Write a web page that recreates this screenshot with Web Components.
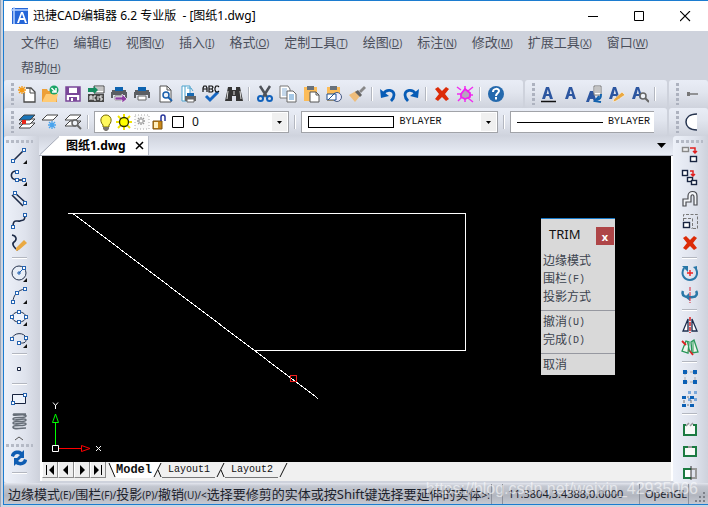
<!DOCTYPE html>
<html lang="zh-CN">
<head>
<meta charset="utf-8">
<title>迅捷CAD编辑器</title>
<style>
html,body{margin:0;height:100%}
body{font-family:"Noto Sans","Noto Sans CJK SC",sans-serif;font-size:12px;background:#cfd5e0;overflow:hidden}
</style>
</head>
<body>
<cad-app></cad-app>
<script>
const mono='"Liberation Mono","Noto Sans CJK SC",monospace';
const S='fill="none" stroke="#1f2c48" stroke-width="1.6"';
const T='fill="none" stroke="#26344f" stroke-width="1"';
const node=(x,y)=>`<rect x="${x-1.5}" y="${y-1.5}" width="3" height="3" fill="#fff" stroke="#2563b0"/>`;
const more='<path d="M17 14v4h-4z" fill="#111"/>';
const A=(x=0)=>`<path d="M${3+x} 14L${7+x} 2h3l4 12h-3l-1-3H${7+x}l-1 3zM${7.6+x} 9h2.400l-1.200-4.500z" fill="#2c56a0" fill-rule="evenodd"/>`;
const printer=(y)=>`<path d="M2 ${y+3}h14v2h1v6h-2v-3H3v3H1v-6h1z" fill="#5b5e63"/><path d="M5 ${y}h8v4h-8z" fill="#0d63b0"/><path d="M5 ${y+9}h8v4h-8z" fill="#fff" stroke="#666"/>`;
const layer=(y,f='#fff')=>`<path d="M6 ${y}h11l-5 5H1z" fill="${f}" stroke="#444" stroke-width="1"/>`;
const mag=(x,y,c='#666')=>`<circle cx="${x}" cy="${y}" r="3" fill="#eef2f8" stroke="${c}" stroke-width="1.500"/><path d="M${x+2} ${y+2}l4 4" stroke="${c}" stroke-width="2"/>`;
const star=(x,y,c)=>`<path d="M${x-4} ${y}h8M${x} ${y-4}v8M${x-3} ${y-3}l6 6M${x+3} ${y-3}l-6 6" stroke="${c}" stroke-width="1.300"/>`;
const box=(x,y,w,h,c='#17233f',f='#fff')=>`<rect x="${x+.5}" y="${y+.5}" width="${w}" height="${h}" fill="${f}" stroke="${c}" stroke-width="1.400"/>`;
const redArrow='<path d="M9 3h3v5M10 6l2 2 2-2" fill="none" stroke="#e02020" stroke-width="1.500"/>';
const cross='<path d="M2 4l3-2 4 4 4-4 3 2-4 5 4 5-3 2-4-4-4 4-3-2 4-5z" fill="#dc2b07"/>';
const page='<path d="M4 1h7l4 4v12H4z" fill="#fff" stroke="#555"/><path d="M11 1v4h4" fill="none" stroke="#555"/>';
const ICONS={
 logo:'<path d="M1 1h16v16H1z" fill="#2566d8"/><path d="M0 3h6M3 0v17M3 3h14" stroke="#b9d5ff" stroke-width="1.500"/><path d="M6 16L10 5h2l4 11h-2l-1-3H9l-1 3zM9.500 11h3L11 7z" fill="#fff" fill-rule="evenodd"/>',
 newfile:'<path d="M8 3h5l4 4v10H6V8" fill="#fff" stroke="#4a4a4a" stroke-width="1.300"/><path d="M12 3v5h5" fill="none" stroke="#4a4a4a"/>'+star(4,5,'#f59a16'),
 open:'<path d="M1 4h5l1 2h9v11H1z" fill="#ed9f37"/><path d="M5 9h12l-2 8H1z" fill="#ffcb75"/><circle cx="13" cy="5" r="4.500" fill="#1ba567"/><path d="M10.500 3l4 4M15 3v4h-4" fill="none" stroke="#fff" stroke-width="1.500"/>',
 save:'<path d="M2 2h14v14H2z" fill="#fff" stroke="#7a4799" stroke-width="1.500"/><path d="M2 2h3v6h8V2h3v8H2zM5 12h8v4H5z" fill="#7a4799"/><path d="M7 13h2v3H7z" fill="#fff"/>',
 acis:'<path d="M7 1h10v7H7z" fill="#fff" stroke="#444"/><path d="M9 3h7M9 5h7" stroke="#888"/><path d="M1 3h6v-2l4 4-4 4V7H1z" fill="#168c60"/><path d="M1 9h16v8H1z" fill="#474747"/><path d="M3 15v-4h2v4M3 13h2M9 11H7v4h2M11 11v4M15.500 11H13v2h2v2h-2" stroke="#fff" fill="none"/>',
 publish:printer(2)+'<path d="M5 12h7V9l5 5-5 4v-3H5z" fill="#8c3fa3" stroke="#fff" stroke-width=".6"/>',
 print:printer(2),
 preview:page+mag(10,10,'#1960ad'),
 plotset:'<path d="M3 1h8v15H3z" fill="#fff" stroke="#4ba2cd"/><path d="M6 1v15M8 3h4l2 3" stroke="#4ba2cd" fill="none"/><path d="M8 8h7v3h2v5H6v-5h2z" fill="#666"/><path d="M8 8h7v3H8z" fill="#1769b2"/><path d="M8 14h7v3H8z" fill="#fff" stroke="#666"/>',
 check:'<path d="M4 11l4 4 8-8" fill="none" stroke="#1767c2" stroke-width="3"/><path d="M1 7V3l1-2h2l1 2v4M1 4h4M7 1v6h3l1-1-1-2H7h3l1-2-1-1zM17 2l-1-1h-2l-1 2v2l1 2h2l1-1" fill="none" stroke="#111" stroke-width="1.200"/>',
 find:'<path d="M3 2h4v3h4V2h4l3 14h-7v-5H7v5H0z" fill="#353535"/><path d="M3 6l-1 8M15 6l1 8M9 6v4" stroke="#ddd"/>',
 cut:'<path d="M4 1l7 11M14 1L7 12" stroke="#4f535a" stroke-width="2.500"/><circle cx="4.500" cy="13.500" r="2.500" fill="none" stroke="#1061bc" stroke-width="2"/><circle cx="13.500" cy="13.500" r="2.500" fill="none" stroke="#1061bc" stroke-width="2"/>',
 copy:'<path d="M1 1h8l2 3v9H1z" fill="#fff" stroke="#777"/><path d="M3 4h5M3 6h5M3 8h5M3 10h5" stroke="#8ab0d5"/><path d="M8 6h6l3 3v8H8z" fill="#fff" stroke="#666"/><path d="M10 10h5M10 12h5M10 14h5" stroke="#4d92ce"/>',
 paste:'<path d="M2 2h13v14H2z" fill="#fcbc58"/><path d="M5 1h7v4H5z" fill="#68717a"/><path d="M8 7h6l3 3v7H8z" fill="#fff" stroke="#555"/><path d="M14 7v3h3" fill="none" stroke="#555"/>',
 pastesp:'<path d="M2 2h13v14H2z" fill="#fcbc58"/><path d="M5 1h7v4H5z" fill="#68717a"/><circle cx="12" cy="12" r="4.500" fill="#eef" stroke="#455a80"/><path d="M2 9h9v6H2z" fill="#fff" stroke="#1e4e8e"/><path d="M3 15l7-7" stroke="#1e4e8e"/>',
 brush:'<path d="M1 10l7-4 4 5-5 6z" fill="#eebd7b"/><path d="M7 7l3-2 4 5-2 2z" fill="#636363"/><path d="M11 6l5-5 2 2-5 5z" fill="#888"/>',
 undo:'<path d="M4 9C8 3 15 5 15 10c0 3-1 4-3 6" fill="none" stroke="#075cb6" stroke-width="2.800"/><path d="M1 4l1 9 8-2z" fill="#075cb6"/>',
 redo:'<path d="M14 9C10 3 3 5 3 10c0 3 1 4 3 6" fill="none" stroke="#075cb6" stroke-width="2.800"/><path d="M17 4l-1 9-8-2z" fill="#075cb6"/>',
 del:cross,
 magic:'<path d="M1 2l4 3M17 2l-5 4M2 16l4-4M12 13l5 4M1 9h4M9 1v3M9 14v3M14 10h3" stroke="#f02ef0" stroke-width="1.500"/><path d="M5 9l4-5 5 4v4l-5 2-4-2z" fill="#b4a6bd" stroke="#f020f0" stroke-width="1.800"/>',
 help:'<circle cx="9" cy="9" r="8" fill="#2569ad"/><path d="M6 7c0-4 6-4 6-1 0 2-3 2-3 5M9 12v2.500" fill="none" stroke="#fff" stroke-width="2"/>',
 a1:A()+'<path d="M2 16.500h15" stroke="#111" stroke-width="1.500"/>',a2:A(),
 a3:'<path d="M1 17L5 6h3l4 11H9l-1-3H5l-1 3z" fill="#2c56a0"/><path d="M9 1h7v9H9z" fill="#fff" stroke="#777"/><path d="M10 3h5M10 5h5M10 7h5" stroke="#888"/><path d="M16 9c0 4-1 5-4 6M14 11l-4 5 6 1" stroke="#1262ae" stroke-width="2" fill="none"/>',
 a4:A(-2)+'<path d="M6 14l8-7 3 3-9 6-3 1z" fill="#eaa942" stroke="#fff" stroke-width=".500"/>',
 a5:A(-2)+mag(12,11),
 layers:layer(10)+layer(6)+layer(2,'#1975b9')+'<path d="M4 7h4v4H4z" fill="#e92718"/>',
 layernew:layer(2)+star(11,12,'#49a4ee'),layerfind:layer(8)+layer(2)+mag(11,10),
 bulb:'<path d="M6 12C2 8 4 2 9 2s7 6 3 10v2H6z" fill="#fff85c" stroke="#756800"/><path d="M6 14h6v2l-2 2H8l-2-2z" fill="#7b7770"/>',
 sun:'<path d="M9 1v16M1 9h16M3 3l12 12M15 3L3 15" stroke="#f0e400" stroke-width="2"/><circle cx="9" cy="9" r="4.500" fill="#ff0" stroke="#302f00" stroke-width="1.300"/>',
 freeze:'<path d="M2 2h14v14H2z" fill="#fafafa" stroke="#aaa" stroke-dasharray="1 2"/>'+star(8,8,'#999')+'<circle cx="8" cy="8" r="2" fill="#fff" stroke="#aaa"/>',
 lock:'<path d="M2 8h9v8H2z" fill="#c88719" stroke="#7d5210"/><path d="M3 9h4v6H3z" fill="#fff0bf"/><path d="M10 8V4q0-2 2-2T14 4v4" fill="none" stroke="#26359a" stroke-width="1.500"/>',
 swatch:'<path d="M3.500 3.500h11v11h-11z" fill="#fff" stroke="#000"/>',
 dim:'<path d="M5 9h10" stroke="#777" stroke-width="1.300"/><rect x="4" y="7" width="3" height="4" fill="#777"/>',
 halfc:'<path d="M14 1C6 1 3 5 3 9s3 8 11 8" fill="#fff" stroke="#26344f" stroke-width="1.500"/>',
 line:`<path d="M4 14L14 4" ${S}/>`+node(3,15)+node(14,4)+more,
 pline:`<path d="M7 3C0 3-1 11 7 12H14" ${S}/>`+node(7,4)+node(7,12)+node(14,12)+more,
 mline:`<path d="M5 3l11 10M2 5l11 11" ${S}/>`+node(5,3)+node(15,13),
 spline:`<path d="M3 15c0-9 4-5 7-6s5 0 5-6" ${S}/>`+node(3,15)+node(15,3),
 sketch:`<path d="M2 1c5 1 5 5 2 7s1 7 4 8" ${S}/><path d="M6 14l8-8 3 3-8 7-3 1z" fill="#eaa942"/>`,
 circle:`<circle cx="9" cy="9" r="7" fill="#e8eef7" stroke="#26344f"/><path d="M9 9l5-5" stroke="#2563b0"/>`+node(14,4)+'<path d="M7 9h4M9 7v4" stroke="#2563b0"/>'+more,
 arc:`<path d="M3 16C3 9 8 4 15 3" ${T}/>`+node(3,16)+node(7,7)+node(15,3)+more,
 ellipse:`<ellipse cx="9" cy="9" rx="7" ry="5" fill="#eef3fb" stroke="#26344f"/>`+node(2,9)+node(9,4)+node(16,9)+node(9,14)+more,
 earc:`<path d="M2 9C3 2 15 2 16 8s-4 5-7 5" ${T}/>`+node(2,9)+node(16,8)+node(9,13)+more,
 point:'<path d="M7.500 7.500h3v3h-3z" fill="#fff" stroke="#17233f"/>',
 rect:'<path d="M2.500 4.500h13v9h-13z" fill="#eef3fb" stroke="#17233f"/>'+node(3,13)+node(15,5),
 helix:'<path d="M16 2H4c-4 3 12-1 12 2S3 4 3 7s13-2 13 1S3 8 3 11s13-2 13 1-13 0-13 3 9 1 13 1" fill="none" stroke="#666e78" stroke-width="1.600"/>',
 refresh:'<path d="M1 7C1 2 8 0 12 3l2-2v8H7l3-3C7 4 5 5 4 8zM17 11c0 5-7 7-11 4l-2 2V9h7l-3 3c3 2 5 1 6-2z" fill="#0f5db2"/>',
 copy1:box(1,1,6,4,'#888','#eee')+box(9,10,6,5)+'<path d="M9 2h5v5M12 5l2 2 2-2" fill="none" stroke="#e02020" stroke-width="1.500"/>',
 copy2:box(1,2,5,5)+box(6,9,5,4)+box(10,12,5,4)+redArrow,
 offset:'<path d="M2 16V9h5V6c0-6 9-6 9 0v9h-3V7c0-3-3-3-3 0v5H5v4z" fill="#f3f5f8" stroke="#4a4c51" stroke-width="1.200"/>',
 scale:'<path d="M2.500 9V2.500h14v14H10M2.500 6.500h9v10" stroke="#777" stroke-dasharray="3 1.500" fill="none"/>'+box(2,10,6,5),
 rotate:'<path d="M3 4C-1 11 4 16 9 16s9-5 6-11" fill="none" stroke="#2a78a8" stroke-width="2"/><path d="M1 2h6v6zM16 2l-4 1 4 4z" fill="#2a78a8"/><path d="M6 9h6M9 6v6" stroke="#e22" stroke-width="1.400"/>',
 rot3:'<path d="M2 5c-2 5 3 7 10 6 3 0 5-3 3-6" fill="none" stroke="#2a78a8" stroke-width="2.500"/><path d="M8 7l-4 4 5 4z" fill="#2a78a8"/><path d="M9 1v16" stroke="#d23" stroke-dasharray="4 1"/>',
 mirror:'<path d="M7 3v12H2zM11 3v12h5z" fill="#fff" stroke="#1c2d4e" stroke-width="1.300"/><path d="M9 1v16" stroke="#d22" stroke-dasharray="4 1" stroke-width="1.500"/>',
 mirror3:'<path d="M5 3L1 13l6 2 1-11zM10 4l3-2 4 12-6 1z" fill="#eef5ec" stroke="#29985a" stroke-width="1.300"/><path d="M1 3l4 4M8 12l4 5" stroke="#d22" stroke-width="1.800"/><path d="M6 3l3 11M12 3v11" stroke="#29985a"/>',
 grid4:'<path d="M4 4h10v10H4z" fill="none" stroke="#aaa"/><path d="M2 2h4v4H2zM12 2h4v4h-4zM2 12h4v4H2zM12 12h4v4h-4z" fill="#0b60b5"/><path d="M8 2v4M8 12v4M2 8h4M12 8h4" stroke="#e0e4ee" stroke-width="2"/>',
 grid6:'<path d="M7 1h3v3H7zM13 1h3v3h-3zM13 8h3v3h-3zM7 8h3v3H7z" fill="#7ba8da"/><path d="M1 6h4v3H1zM9 6h4v3H9zM1 14h4v3H1zM9 14h4v3H9z" fill="#0b60b5"/><path d="M3 10v3M10 10v3M6 7h2M6 15h2" stroke="#777"/>',
 break1:'<path d="M5 5H3v10h12V5h-3" fill="#f8faf8" stroke="#1b7b42" stroke-width="2"/><path d="M5 6l3-3M9 6l3-3" stroke="#999" stroke-width="1.500"/>',
 break2:'<path d="M3 5h12v9H3z" fill="#f8faf8" stroke="#1b7b42" stroke-width="2"/><path d="M7 5h4" stroke="#999" stroke-width="2"/>',
 break3:'<path d="M10 5h5v9h-5" fill="none" stroke="#999" stroke-width="2"/><path d="M10 5H3v9h7" fill="#fff" stroke="#1b7b42" stroke-width="2"/><path d="M10 2v14" stroke="#333"/>'
};
// The fragment is filled in before it is attached, so that nested elements see their attributes when they connect.
function define(tag,html,setup){
  const t=document.createElement('template');t.innerHTML=html;
  customElements.define(tag,class extends HTMLElement{
    connectedCallback(){
      if(this.shadowRoot)return;
      const f=t.content.cloneNode(true);
      if(setup)setup(this,f);
      this.attachShadow({mode:'open'}).append(f);
    }
  });
}
const BTN='button{all:unset;box-sizing:border-box;display:flex;align-items:center;justify-content:center;cursor:default}';

define('cad-icon','<style>:host{display:block;width:18px;height:18px;flex:none}svg{display:block}</style><svg width="18" height="18" viewBox="0 0 18 18" aria-hidden="true"></svg>',
 (h,r)=>{r.querySelector('svg').innerHTML=ICONS[h.getAttribute('name')]||''});

define('cad-tool',`<style>:host{display:block;flex:none}${BTN} button{width:23px;height:22px}</style><button type="button"><cad-icon></cad-icon></button>`,
 (h,r)=>{const n=h.getAttribute('name');r.querySelector('cad-icon').setAttribute('name',n);r.querySelector('button').setAttribute('aria-label',n)});

define('cad-sep',`<style>:host{display:flex;flex:none;align-items:center;justify-content:center;width:8px;height:14px}
i{width:1px;height:14px;background:#b3b7c0;border-right:1px solid #fff}
:host([h]){width:auto;height:8px}:host([h]) i{width:15px;height:1px;border-right:0;border-bottom:1px solid #fff;background:#b3b7c0}</style><i></i>`);

define('cad-grip',`<style>:host{display:block;flex:none;width:3px;height:22px;background:repeating-linear-gradient(#adb2bf 0 3px,transparent 3px 5px)}
:host([h]){width:27px;height:3px;background:repeating-linear-gradient(90deg,#b5bac6 0 3px,transparent 3px 5px)}</style>`);

define('cad-bar',`<style>:host{display:flex;align-items:center;min-width:0;overflow:hidden;box-sizing:border-box;height:28px;padding-left:7px;border-radius:3px;background:linear-gradient(#e9edf6,#e1e5ee 45%,#cfd3dd)}
.s{display:flex;align-items:center;margin-left:1px;flex:1;min-width:0}</style><cad-grip></cad-grip><div class="s"><slot></slot></div>`);

define('cad-column',`<style>:host{display:flex;flex-direction:column;align-items:center;overflow:hidden;background:linear-gradient(90deg,#edf1f9,#dfe3ed 60%,#ced2dc);border-radius:3px;box-sizing:border-box;padding-top:4px}
cad-grip{margin-bottom:1px}</style><cad-grip h></cad-grip><slot></slot>`);

define('cad-combo',`<style>:host{display:flex;align-items:center;box-sizing:border-box;height:22px;background:#fff;border:1px solid #a1a3a8;min-width:0;padding-left:1px}
select{all:unset;flex:1;min-width:0;font:12px "Noto Sans",sans-serif;color:#111;height:18px;line-height:18px;padding-left:5px}
:host([mono]) select{font:10px ${mono};line-height:18px}
span{display:flex;align-items:center;justify-content:center;width:15px;height:18px;margin-right:1px;background:#f0f0f0}
:host([cut]) span{display:none}:host([cut]){border-right:0}
</style><slot></slot><select><option></option></select><span><svg width="5" height="3"><path d="M0 0h5L2.500 3z"/></svg></span>`,
 (h,r)=>{r.querySelector('option').textContent=h.getAttribute('value');r.querySelector('select').setAttribute('aria-label',h.getAttribute('label'));});

define('cad-title',`<style>:host{display:flex;align-items:center;height:30px;background:#fff;color:#000;padding-left:7px}
h1{font-size:12px;font-weight:400;margin:0 0 0 4px;flex:1;white-space:pre;line-height:18px}
${BTN} button{width:46px;height:30px}</style>
<cad-icon name="logo"></cad-icon><h1>迅捷CAD编辑器 6.2 专业版  - [图纸1.dwg]</h1>
<button aria-label="最小化"><svg width="11" height="11"><path d="M0 5.500h10" stroke="#000"/></svg></button>
<button aria-label="最大化"><svg width="11" height="11"><path d="M.5.5h9v9h-9z" fill="none" stroke="#000"/></svg></button>
<button aria-label="关闭"><svg width="11" height="11"><path d="M0 0l10 10M10 0L0 10" stroke="#000" stroke-width="1.100"/></svg></button>`.replace('width:46px;height:30px','width:46px;height:30px;flex:none'));

define('cad-menu-item',`<style>:host{display:block;flex:none}${BTN} button{height:25px;font-size:13px;color:#4b4f5b;align-items:baseline;line-height:22px;white-space:nowrap}small{font-size:10px}</style><button type="button"><slot></slot><small>(<u></u>)</small></button>`,
 (h,r)=>{r.querySelector('u').textContent=h.getAttribute('key')});

define('cad-menu',`<style>:host{display:flex;flex-wrap:wrap;column-gap:15px;height:48px;align-content:flex-start;background:#ced2dc;padding:0 17px;overflow:hidden}</style><slot></slot>`);

define('cad-filetab',`<style>:host{display:flex;height:20px;align-items:flex-end;background:linear-gradient(#d0d4de,#e9edf6);border-bottom:1px solid #aeb2bd;box-sizing:border-box;padding-right:5px}
svg{display:block}.t{display:flex;align-items:center;height:19px;background:#fff;border-right:1px solid #b8bdc9;font:bold 12px "Noto Sans","Noto Sans CJK SC",sans-serif;line-height:18px;color:#000;padding:0 4px 0 7px;gap:9px}
.t span{white-space:nowrap}${BTN} .more{margin-left:auto;width:14px;height:20px}</style>
<svg width="20" height="19"><path d="M2 19L20 0v19z" fill="#fff"/><path d="M1 18.500L20 .5" stroke="#a6abb8"/></svg>
<div class="t"><span>图纸1.dwg</span><button aria-label="关闭图纸"><svg width="9" height="9"><path d="M1 1l7 7M8 1L1 8" stroke="#000" stroke-width="1.500"/></svg></button></div>
<button class="more" aria-label="更多"><svg width="9" height="5"><path d="M0 0h9L4.500 5z"/></svg></button>`);

define('cad-drawing',`<style>:host{display:block;position:relative;flex:1;min-height:0;background:#000;overflow:hidden}
svg{display:block;width:100%;height:100%}.ucs{position:absolute;left:8px;bottom:6px;width:54px;height:58px}</style>
<svg shape-rendering="crispEdges" fill="none" stroke="#fff"><path d="M26 57.500h397.500v137H212"/><path d="M31 57.500L276 242.500"/><path d="M248.500 219.500h6v6h-6z" stroke="#f02020"/></svg>
<svg class="ucs" viewBox="0 0 54 58" fill="none"><path d="M5.500 48V25M2.500 24.500h6L5.500 16z" stroke="#0f0"/><path d="M9 50.500h23M31.500 47.500v6L40 50.500z" stroke="#f00"/><path d="M2.500 47.500h6v6h-6z" stroke="#fff"/><path d="M3 4.500l2.500 3 2.500-3M5.500 7v4M46 48l5 5M51 48l-5 5" stroke="#fff"/></svg>
<slot></slot>`);

define('cad-command',`<style>:host{position:absolute;left:499px;top:62px;width:74px;box-sizing:border-box;background:#d9d9d9;border-top:1px solid #1879c7;font:12px ${mono};color:#3c434e}
header{display:flex;align-items:center;justify-content:space-between;font:13px "Noto Sans",sans-serif;color:#111;height:30px;padding:0 1px 4px 8px}
${BTN} header button{width:18px;height:18px;background:#ae4547;color:#fff;font:bold 11px "Noto Sans",sans-serif;margin-top:4px}
li button{justify-content:flex-start;font-size:12px;line-height:18px;height:18px}small{font-size:10px}
ul{list-style:none;margin:0;padding:0 2px}hr{border:0;border-top:1px solid #9698a0;margin:3px 0 3px}</style>
<header>TRIM<button aria-label="关闭">x</button></header>
<ul><li><button>边缘模式</button></li><li><button>围栏<small>(F)</small></button></li><li><button>投影方式</button></li></ul><hr>
<ul><li><button>撤消<small>(U)</small></button></li><li><button>完成<small>(D)</small></button></li></ul><hr>
<ul><li><button>取消</button></li></ul>`);

define('cad-sheets',`<style>:host{display:flex;height:19px;background:#f0f0f0;color:#111;font:10px ${mono};align-items:flex-start}
${BTN} .n{width:16px;height:16px;border-right:1px solid #8b8b8b;border-bottom:1px solid #8b8b8b;border-left:1px solid #fff;background:#eee}
.t{height:16px;line-height:16px;border-bottom:1px solid #777;padding:0 5px 0 6px}.a{font:bold 12px ${mono};background:#fff;line-height:16px;border-color:#fff;padding:0}
svg{display:block;flex:none}</style>
<button class="n" aria-label="首页"><svg width="10" height="10"><path d="M1 0h1v10H1zM9 0v10L4 5z"/></svg></button>
<button class="n" aria-label="上一页"><svg width="10" height="10"><path d="M7 0v10L2 5z"/></svg></button>
<button class="n" aria-label="下一页"><svg width="10" height="10"><path d="M3 0v10l5-5z"/></svg></button>
<button class="n" aria-label="末页"><svg width="10" height="10"><path d="M1 0v10l5-5zM8 0h1v10H8z"/></svg></button>
<svg width="10" height="16"><path d="M3 1l6 14h1V1z" fill="#fff"/><path d="M3 1l6 14" stroke="#111"/></svg>
<button class="t a">Model</button>
<svg width="10" height="16"><path d="M0 0h9L2 15H0z" fill="#fff"/><path d="M9 1L2 15M6 8l3 7" stroke="#111" fill="none"/></svg>
<button class="t">Layout1</button>
<svg width="10" height="16"><path d="M9 1L2 15M6 8l3 7" stroke="#111" fill="none"/></svg>
<button class="t">Layout2</button>
<svg width="10" height="16"><path d="M9 1L2 15" stroke="#111"/></svg>`);

define('cad-status',`<style>:host{display:flex;align-items:center;height:21px;background:linear-gradient(#e3e6ee 0,#c4c8d1 15%,#b2b6bf 60%,#c6c9d1);color:#1d222c;font-size:13px;line-height:20px;position:relative;white-space:nowrap}
div{box-sizing:border-box;height:20px;border-right:1px solid #8d919b}
.m{flex:1;min-width:0;padding-left:4px;overflow:hidden}small{font-size:10px}.g{width:11px}.p{width:137px;font-size:11px;padding-left:5px}.o{width:49px;font-size:11px;padding-left:5px}
svg{width:19px;height:20px;flex:none}
span{position:absolute;right:10px;top:-4px;font:16px "Liberation Sans",sans-serif;line-height:20px;color:#ffffff90}</style>
<div class="m">边缘模式<small>(E)/</small>围栏<small>(F)/</small>投影<small>(P)/</small>撤销<small>(U)/&lt;</small>选择要修剪的实体或按Shift键选择要延伸的实体<small>&gt;:</small></div>
<div class="g"></div><div class="p">11.3804,3.4388,0.0000</div><div class="o">OpenGL</div>
<svg><path d="M14 8h2v2h-2zM10 12h2v2h-2zM14 12h2v2h-2zM6 16h2v2H6zM10 16h2v2h-2zM14 16h2v2h-2z" fill="#7d8089"/></svg>
<span>https://blog.csdn.net/weixin_42935066</span>`);

const tools=s=>s.split(' ').map(n=>n==='|'?'<cad-sep></cad-sep>':n==='-'?'<cad-sep h></cad-sep>':`<cad-tool name="${n}"></cad-tool>`).join('');
const menus=[['文件','F'],['编辑','E'],['视图','V'],['插入','I'],['格式','O'],['定制工具','T'],['绘图','D'],['标注','N'],['修改','M'],['扩展工具','X'],['窗口','W'],['帮助','H']];
define('cad-app',`<style>:host{display:block;box-sizing:border-box;height:100vh;padding:0 0 2px 2px;border-left:1px solid #9aa6b8}
.w{display:flex;flex-direction:column;height:100%;box-sizing:border-box;border:1px solid #1c7cd0;border-right:0;background:#ced2dc}
.r{display:grid;gap:2px;height:28px}.r1{grid-template-columns:1fr 142px 39px;padding-top:1px}.r2{grid-template-columns:1fr 39px}
.r2 cad-combo{flex:196 1 0}.r2 .first{flex:195 1 0;margin-left:2px}.r2 .last{flex:144 1 0;margin-right:13px}
.main{flex:1;min-height:0;display:grid;grid-template-columns:35px 1fr 35px}
.doc{display:flex;flex-direction:column;min-width:0;min-height:0;margin-bottom:2px}.frame{flex:1;min-height:0;display:flex;flex-direction:column;border-left:2px solid #fff;border-right:2px solid #fff;margin-left:1px}
.lb{width:86px;height:12px;box-sizing:border-box;border:1px solid #000;margin-left:5px;flex:none}.ln{width:86px;height:1px;background:#000;margin-left:5px;flex:none}
.ch{height:12px;display:flex;align-items:center}.col{padding-right:5px}.rc{padding-right:2px}.ic{display:flex;padding-left:1px}.gap{margin:0 2px}
</style><div class="w"><cad-title></cad-title>
<cad-menu>${menus.map(m=>`<cad-menu-item key="${m[1]}">${m[0]}</cad-menu-item>`).join('')}</cad-menu>
<div class="r r1"><cad-bar>${tools('newfile open save acis publish print preview plotset check find | cut copy paste pastesp brush | undo redo | del magic | help')}</cad-bar>
<cad-bar>${tools('a1 a2 a3 a4 a5 |')}</cad-bar><cad-bar>${tools('dim')}</cad-bar></div>
<div class="r r2"><cad-bar>${tools('layers layernew layerfind |')}<cad-combo class="first" value="0" label="图层"><div class="ic"><cad-icon name="bulb"></cad-icon><cad-icon name="sun"></cad-icon><cad-icon name="freeze"></cad-icon><cad-icon name="lock"></cad-icon><cad-icon name="swatch"></cad-icon></div></cad-combo>
<cad-sep class="gap"></cad-sep><cad-combo mono value="BYLAYER" label="颜色"><div class="lb"></div></cad-combo>
<cad-sep class="gap"></cad-sep><cad-combo class="last" mono cut value="BYLAYER" label="线型"><div class="ln"></div></cad-combo></cad-bar><cad-bar>${tools('halfc')}</cad-bar></div>
<div class="main"><cad-column class="col">${tools('line pline mline spline sketch - circle arc ellipse earc - point - rect helix')}
<div class="ch"><svg width="11" height="5"><path d="M1 4l4-3 4 3" fill="none" stroke="#555"/></svg></div><cad-grip h></cad-grip>${tools('refresh -')}</cad-column>
<div class="doc"><cad-filetab></cad-filetab><div class="frame"><cad-drawing><cad-command></cad-command></cad-drawing><cad-sheets></cad-sheets></div></div>
<cad-column class="rc">${tools('copy1 copy2 offset scale del - rotate rot3 - mirror mirror3 - grid4 grid6 - break1 break2 break3')}</cad-column></div>
<cad-status></cad-status></div>`);
</script>
</body>
</html>
